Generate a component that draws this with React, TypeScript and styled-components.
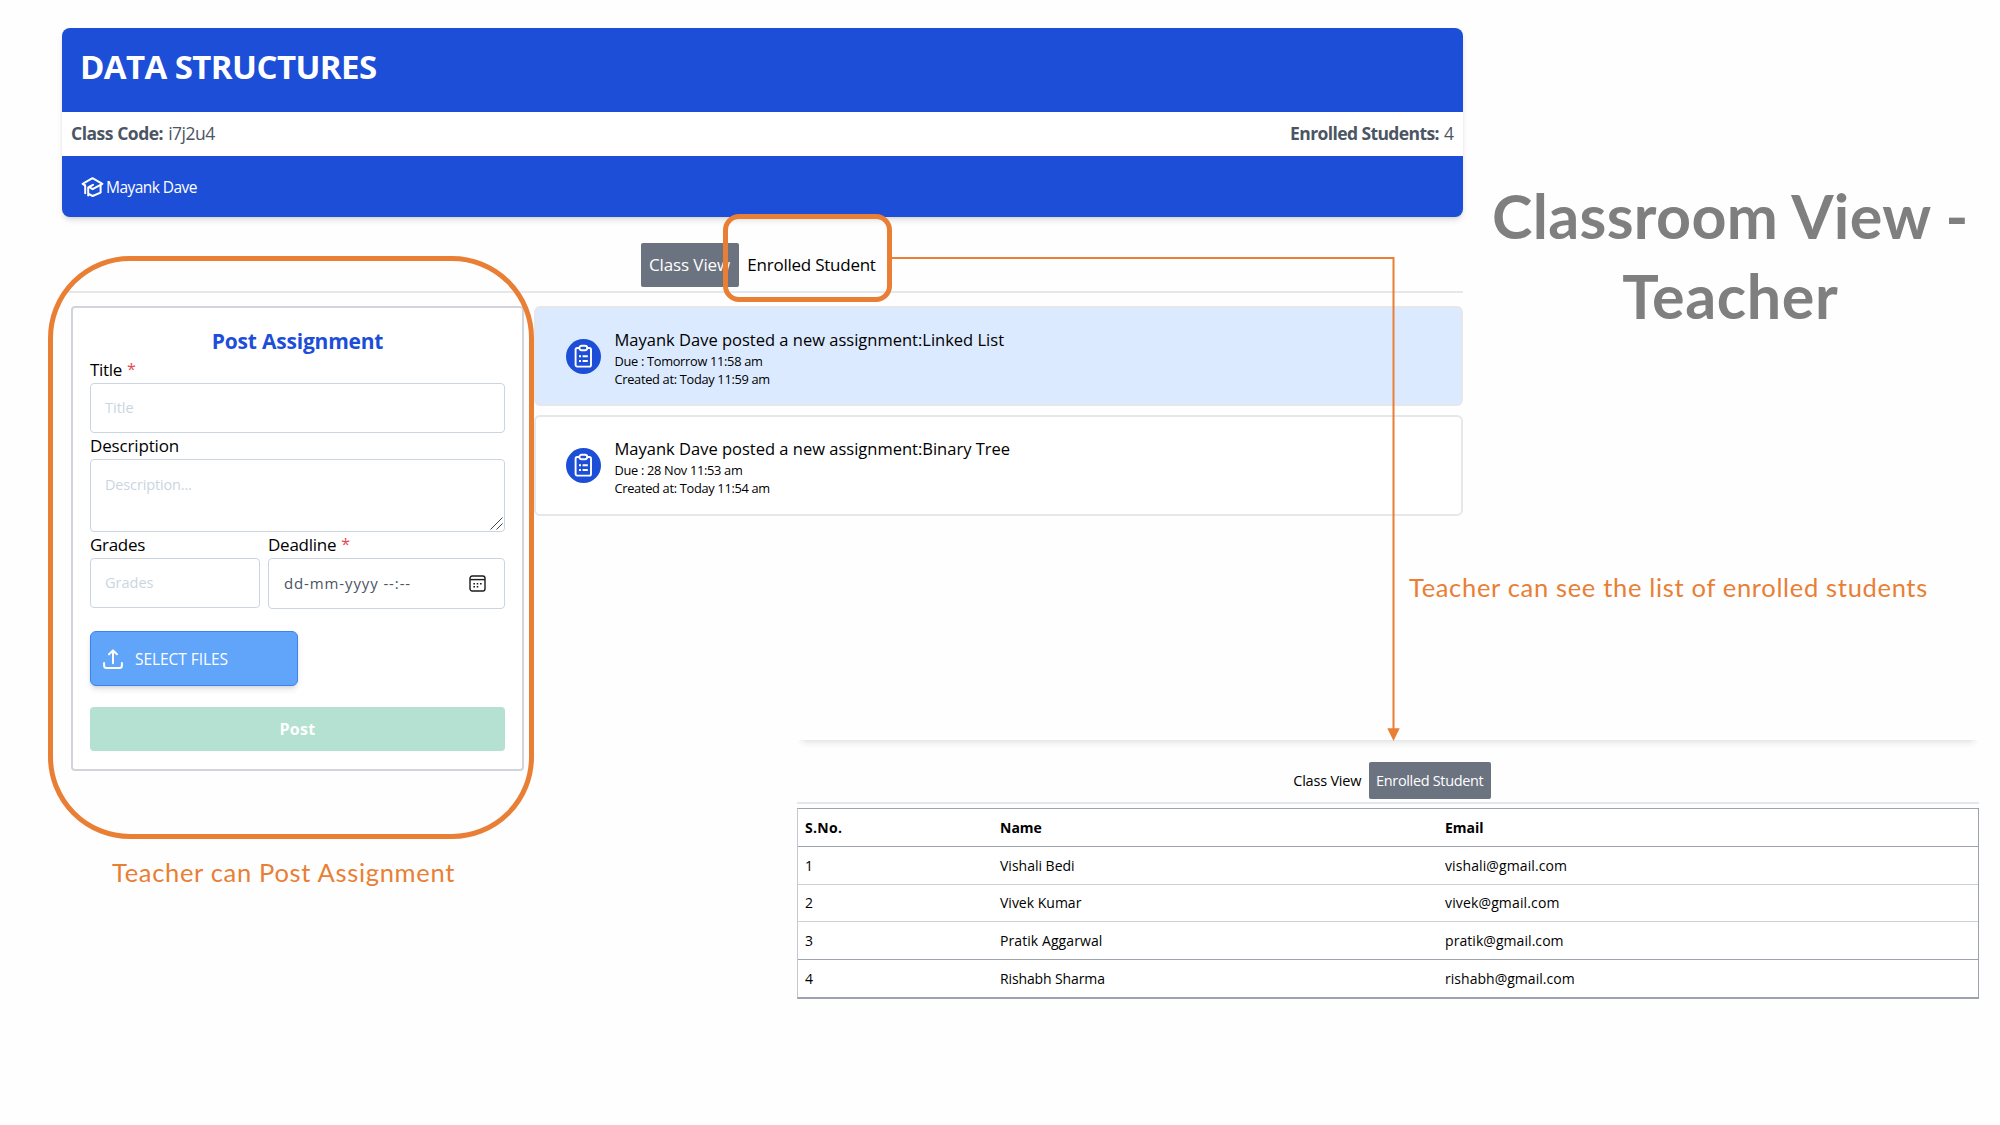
import React from "react";
import styled, { createGlobalStyle, css } from "styled-components";

const ui = `"Open Sans", "Noto Sans", sans-serif`;
const slide = `Lato, "Open Sans", sans-serif`;
const orange = "#e97f35";

const GlobalStyle = createGlobalStyle`
  *, *::before, *::after { box-sizing: border-box; }
  body { margin: 0; background: #fefefe; font-family: ${ui}; color: #000; }
  h1, h2, h3, p { margin: 0; }
`;

const Page = styled.main`
  position: relative;
  width: 2000px;
  height: 1125px;
  overflow: hidden;
  padding: 28px 21.5px 0 62px;
  display: grid;
  grid-template-columns: 1401px 1fr;
  grid-template-rows: 712px 1fr;
`;

const Text = styled.span<{ $size: number; $line: number; $ls?: number; $bold?: boolean }>`
  font-size: ${(p) => p.$size}px;
  line-height: ${(p) => p.$line}px;
  letter-spacing: ${(p) => p.$ls ?? 0}px;
  font-weight: ${(p) => (p.$bold ? 700 : 400)};
  white-space: pre;
`;

/* classroom */
const Classroom = styled.section`
  grid-area: 1 / 1 / 3 / 2;
`;
const Banner = styled.header`
  height: 189px;
  border-radius: 8px;
  overflow: hidden;
  display: grid;
  grid-template-rows: 84px 44px 61px;
  color: #fff;
  background: #1d4ed8;
  box-shadow: 0 4px 6px -1px rgba(0, 0, 0, 0.12), 0 2px 4px -2px rgba(0, 0, 0, 0.12);
`;
const BannerTitle = styled.div`
  padding: 17px 18px 0;
`;
const BannerMeta = styled.div`
  background: #fff;
  color: #4b5563;
  padding: 0 9px 2px;
  display: flex;
  align-items: center;
  justify-content: space-between;
`;
const Pair = styled.div`
  display: flex;
  gap: 5px;
`;
const BannerTeacher = styled.div`
  padding: 0 19px 0;
  display: flex;
  align-items: center;
  gap: 2px;
`;

const Tabs = styled.nav<{ $small?: boolean }>`
  display: flex;
  justify-content: center;
  border-bottom: 2px solid #e5e7eb;
  ${(p) =>
    p.$small
      ? css`
          height: 42px;
          padding-left: 1px;
        `
      : css`
          height: 50px;
          margin: 26px 0 0 5px;
          padding-right: 5px;
        `}
`;
const Tab = styled.button<{ $active?: boolean; $w: number; $h: number }>`
  border: 0;
  padding: 0;
  width: ${(p) => p.$w}px;
  height: ${(p) => p.$h}px;
  display: flex;
  align-items: center;
  justify-content: center;
  font-family: inherit;
  border-radius: 2px;
  color: ${(p) => (p.$active ? "#fff" : "#000")};
  background: ${(p) => (p.$active ? "#6b7280" : "transparent")};
`;

const Columns = styled.div`
  display: grid;
  grid-template-columns: 453px 1fr;
  column-gap: 9.5px;
  margin: 13px 0 0 9px;
  align-items: start;
`;

const Form = styled.form`
  height: 465px;
  border: 2px solid #d1d5db;
  border-radius: 4px;
  background: #fff;
  padding: 18px 17px 0;
  display: flex;
  flex-direction: column;
`;
const FormTitle = styled.h3`
  color: #1d4ed8;
  line-height: 30px;
  display: flex;
  justify-content: center;
`;
const Label = styled.label<{ $first?: boolean }>`
  display: flex;
  gap: 5px;
  height: ${(p) => (p.$first ? 27 : 26)}px;
  padding-top: ${(p) => (p.$first ? 1 : 0)}px;
`;
const Star = styled.span`
  color: #e5484d;
  font-size: 16px;
  line-height: 24px;
`;
const field = css`
  display: block;
  width: 100%;
  margin: 0;
  border: 1px solid #cbd5e1;
  border-radius: 4px;
  background: #fff;
  outline: 0;
  font-family: ${ui};
  font-size: 14.5px;
  line-height: 20px;
  padding: 0 14px 1px;
  &::placeholder {
    color: #cbd5e1;
    opacity: 1;
  }
`;
const Input = styled.input`
  ${field}
  height: 50px;
`;
const AreaWrap = styled.div`
  position: relative;
  height: 73px;
`;
const Area = styled.textarea`
  ${field}
  height: 73px;
  padding-top: 15px;
  letter-spacing: -0.15px;
  resize: none;
`;
const Grip = styled.svg`
  position: absolute;
  right: 2px;
  bottom: 2px;
`;
const Pairing = styled.div`
  display: grid;
  grid-template-columns: 170px 237px;
  column-gap: 8px;
`;
const DateField = styled.div`
  ${field}
  height: 51px;
  padding: 0 18px 1px 15px;
  display: flex;
  align-items: center;
  justify-content: space-between;
  color: #4b5563;
`;
const SelectFiles = styled.button`
  margin-top: 22px;
  width: 208px;
  height: 55px;
  border: 1px solid #3b82f6;
  border-radius: 6px;
  background: #60a5fa;
  color: #fff;
  padding: 0 0 0 12px;
  display: flex;
  align-items: center;
  gap: 12px;
  font-family: inherit;
  box-shadow: 0 4px 6px -1px rgba(0, 0, 0, 0.12), 0 2px 4px -2px rgba(0, 0, 0, 0.12);
`;
const PostButton = styled.button`
  margin-top: 21px;
  height: 44px;
  border: 0;
  border-radius: 4px;
  background: #b4e1d1;
  color: #fff;
  font-family: inherit;
`;

const Feed = styled.div`
  display: grid;
  row-gap: 9px;
`;
const Post = styled.article<{ $fresh?: boolean }>`
  height: ${(p) => (p.$fresh ? 100 : 101)}px;
  border: 2px solid #e5e7eb;
  border-radius: 6px;
  background: ${(p) => (p.$fresh ? "#dbeafe" : "#fff")};
  padding: 0 30.5px;
  display: flex;
  align-items: center;
  gap: 13.5px;
`;
const Badge = styled.div`
  width: 35px;
  height: 35px;
  border-radius: 50%;
  background: #1d4ed8;
  display: grid;
  place-items: center;
`;
const PostBody = styled.div`
  display: flex;
  flex-direction: column;
  padding-top: 2px;
`;

/* slide title */
const Heading = styled.h1`
  grid-area: 1 / 2;
  padding: 148px 0 0 19px;
  display: flex;
  flex-direction: column;
  align-items: center;
  font-family: ${slide};
  color: #7f7f7f;
`;

/* enrolled list */
const Enrolled = styled.section`
  grid-area: 2 / 1 / 3 / 3;
  z-index: 1;
  margin-left: 735px;
`;
const Edge = styled.div`
  height: 22px;
  background: linear-gradient(#e6e6e6, #f6f6f6 4px, #fefefe 8px);
  -webkit-mask-image: linear-gradient(90deg, transparent, #000 10px, #000 calc(100% - 10px), transparent);
`;
const Table = styled.table`
  width: 100%;
  margin-top: 4px;
  border-spacing: 0;
  border: 1px solid #9ca3af;
  border-left-color: #c3c7ce;
  border-bottom-width: 2px;
  background: #fff;
  table-layout: fixed;
`;
const Row = styled.tr<{ $rule?: string; $h: number }>`
  height: ${(p) => p.$h}px;
  & > * {
    padding: 0 0 0 7px;
    text-align: left;
    vertical-align: middle;
    font-size: 0;
    border-bottom: ${(p) => (p.$rule ? `1px solid ${p.$rule}` : "0")};
  }
`;

/* annotations */
const Outline = styled.div<{ $x: number; $y: number; $w: number; $h: number; $r: number }>`
  position: absolute;
  z-index: 2;
  left: ${(p) => p.$x}px;
  top: ${(p) => p.$y}px;
  width: ${(p) => p.$w}px;
  height: ${(p) => p.$h}px;
  border: 5px solid ${orange};
  border-radius: ${(p) => p.$r}px;
`;
const Note = styled.p<{ $x: number; $y: number }>`
  position: absolute;
  z-index: 2;
  left: ${(p) => p.$x}px;
  top: ${(p) => p.$y}px;
  display: flex;
  font-family: ${slide};
  color: ${orange};
`;
const Connector = styled.svg`
  position: absolute;
  z-index: 2;
  left: 890px;
  top: 250px;
`;

const CapIcon = () => (
  <svg width="23" height="22" viewBox="0 0 23 22" fill="none" stroke="#fff" strokeWidth="2" strokeLinejoin="round" strokeLinecap="round">
    <path d="M4 9.4 1.6 7.8 11.5 2.2 21.4 7.8 11.6 13.2 8 11 12 8.8" />
    <path d="M4.2 9.5V17.2M7.2 11.4V19.4M7.2 17.6 11.6 20 19.6 16.6V9.5" />
  </svg>
);
const ClipboardIcon = () => (
  <svg width="19" height="25" viewBox="0 0 19 25" fill="none" stroke="#fff" strokeWidth="1.9">
    <rect x="1.6" y="4" width="15.4" height="18.6" rx="1.6" />
    <rect x="5.4" y="1.8" width="7.8" height="4.4" rx="2.2" fill="#1d4ed8" />
    <path d="M5 12.2h2M8.6 12.2h5.2M5 17h2M8.6 17h5.2" strokeWidth="2" />
  </svg>
);
const UploadIcon = () => (
  <svg width="20" height="20" viewBox="0 0 20 20" fill="none" stroke="#fff" strokeWidth="2" strokeLinecap="round" strokeLinejoin="round">
    <path d="M10 14.2V2M6 5.2 10 1.4 14 5.2" />
    <path d="M1.1 14V16.4Q1.1 18.9 3.6 18.9H16.4Q18.9 18.9 18.9 16.4V14" />
  </svg>
);
const CalendarIcon = () => (
  <svg width="17" height="17" viewBox="0 0 17 17" fill="none" stroke="#1c1c1c" strokeWidth="1.4">
    <rect x="1" y="1" width="15" height="15" rx="2.2" />
    <path d="M1 4.6h15" />
    <path d="M4.4 8.7h1.6M7.7 8.7h1.6M11 8.7h1.6M4.4 11.8h1.6M7.7 11.8h1.6" strokeWidth="1.6" />
  </svg>
);

type TProps = { s: number; l: number; ls?: number; b?: boolean; children: string };
const T = ({ s, l, ls, b, children }: TProps) => (
  <Text $size={s} $line={l} $ls={ls} $bold={b}>
    {children}
  </Text>
);

const posts = [
  { fresh: true, title: "Mayank Dave posted a new assignment:Linked List", due: "Due : Tomorrow 11:58 am", created: "Created at: Today 11:59 am" },
  { fresh: false, title: "Mayank Dave posted a new assignment:Binary Tree", due: "Due : 28 Nov 11:53 am", created: "Created at: Today 11:54 am" },
];
const students = [
  { no: "1", name: "Vishali Bedi", email: "vishali@gmail.com", rule: "#cdd0d5", ls: [0, 0.1], h: 38 },
  { no: "2", name: "Vivek Kumar", email: "vivek@gmail.com", rule: "#cdd0d5", ls: [0, 0.14], h: 37 },
  { no: "3", name: "Pratik Aggarwal", email: "pratik@gmail.com", rule: "#9ca3af", ls: [0.08, 0.06], h: 38 },
  { no: "4", name: "Rishabh Sharma", email: "rishabh@gmail.com", rule: undefined, ls: [-0.12, 0.03], h: 37 },
];

export default function App() {
  return (
    <>
      <GlobalStyle />
      <Page>
        <Classroom>
          <Banner>
            <BannerTitle>
              <T s={33} l={44} ls={-0.58} b>DATA STRUCTURES</T>
            </BannerTitle>
            <BannerMeta>
              <Pair>
                <T s={17.5} l={28} ls={-0.48} b>Class Code:</T>
                <T s={17.5} l={28} ls={-0.5}>i7j2u4</T>
              </Pair>
              <Pair>
                <T s={17.5} l={28} ls={-0.6} b>Enrolled Students:</T>
                <T s={17.5} l={28}>4</T>
              </Pair>
            </BannerMeta>
            <BannerTeacher>
              <CapIcon />
              <T s={15.5} l={24} ls={-0.54}>Mayank Dave</T>
            </BannerTeacher>
          </Banner>
          <Tabs>
            <Tab $active $w={98} $h={44}><T s={17} l={26} ls={-0.1}>Class View</T></Tab>
            <Tab $w={146} $h={44}><T s={17} l={26} ls={-0.24}>Enrolled Student</T></Tab>
          </Tabs>
          <Columns>
            <Form>
              <FormTitle><T s={21} l={30} ls={-0.2} b>Post Assignment</T></FormTitle>
              <Label $first><T s={17} l={26} ls={-0.31}>Title</T><Star>*</Star></Label>
              <Input placeholder="Title" />
              <Label><T s={17} l={26} ls={-0.16}>Description</T></Label>
              <AreaWrap>
                <Area placeholder="Description..." />
                <Grip width="13" height="13" viewBox="0 0 13 13" fill="none" stroke="#444" strokeWidth="1">
                  <path d="M0.5 12.5 12.5 0.5M6.5 12.5 12.5 6.5" />
                </Grip>
              </AreaWrap>
              <Pairing>
                <div>
                  <Label><T s={17} l={26} ls={-0.3}>Grades</T></Label>
                  <Input placeholder="Grades" />
                </div>
                <div>
                  <Label><T s={17} l={26} ls={-0.25}>Deadline</T><Star>*</Star></Label>
                  <DateField><T s={15} l={24} ls={0.88}>dd-mm-yyyy --:--</T><CalendarIcon /></DateField>
                </div>
              </Pairing>
              <SelectFiles type="button"><UploadIcon /><T s={15.5} l={24} ls={-0.05}>SELECT FILES</T></SelectFiles>
              <PostButton type="button"><T s={16} l={24} ls={0.25} b>Post</T></PostButton>
            </Form>
            <Feed>
              {posts.map((p) => (
                <Post key={p.title} $fresh={p.fresh}>
                  <Badge><ClipboardIcon /></Badge>
                  <PostBody>
                    <T s={16.5} l={23} ls={0}>{p.title}</T>
                    <T s={12.8} l={21} ls={-0.3}>{p.due}</T>
                    <T s={12.8} l={15} ls={-0.3}>{p.created}</T>
                  </PostBody>
                </Post>
              ))}
            </Feed>
          </Columns>
        </Classroom>

        <Heading>
          <T s={61} l={80} ls={0.35} b>Classroom View -</T>
          <T s={61} l={80} ls={0.6} b>Teacher</T>
        </Heading>

        <Enrolled>
          <Edge />
          <Tabs as="div" $small>
            <Tab $w={83} $h={37}><T s={14.5} l={22} ls={-0.21}>Class View</T></Tab>
            <Tab $active $w={122} $h={37}><T s={14.5} l={22} ls={-0.34}>Enrolled Student</T></Tab>
          </Tabs>
          <Table>
            <colgroup><col width="195" /><col width="445" /><col /></colgroup>
            <thead>
              <Row $rule="#9ca3af" $h={38}>
                <th><T s={14} l={22} ls={0.3} b>S.No.</T></th>
                <th><T s={14} l={22} b>Name</T></th>
                <th><T s={14} l={22} b>Email</T></th>
              </Row>
            </thead>
            <tbody>
              {students.map((s) => (
                <Row key={s.no} $rule={s.rule} $h={s.h}>
                  <td><T s={14} l={22}>{s.no}</T></td>
                  <td><T s={14} l={22} ls={s.ls[0]}>{s.name}</T></td>
                  <td><T s={14} l={22} ls={s.ls[1]}>{s.email}</T></td>
                </Row>
              ))}
            </tbody>
          </Table>
        </Enrolled>

        <Outline $x={48} $y={255.5} $w={486} $h={583.5} $r={82} />
        <Outline $x={723} $y={214} $w={169} $h={88} $r={16} />
        <Connector width="512" height="494" viewBox="0 0 512 494">
          <path d="M2 8H503.5V480" fill="none" stroke={orange} strokeWidth="2" />
          <path d="M497.3 478.3H509.7L503.5 491Z" fill={orange} />
        </Connector>
        <Note $x={112} $y={856}><T s={25.5} l={32} ls={0.69}>Teacher can Post Assignment</T></Note>
        <Note $x={1409} $y={571}><T s={25.5} l={32} ls={0.68}>Teacher can see the list of enrolled students</T></Note>
      </Page>
    </>
  );
}
